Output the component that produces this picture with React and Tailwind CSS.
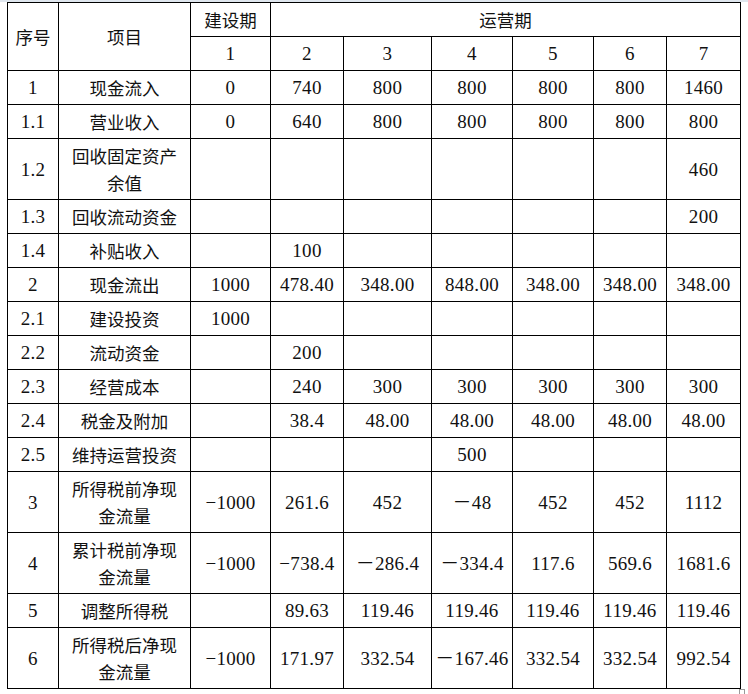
const cn = "font-['Noto_Sans_CJK_SC',sans-serif] text-[17.5px] leading-[27px]";
const num = "font-['Liberation_Serif','Noto_Sans_CJK_SC',serif] text-[19px] leading-[27px] tracking-[0.3px]";
const cell = "border border-black text-center align-middle p-0 text-[#111]";

const colWidths = ["w-[51px]", "w-[132px]", "w-[80px]", "w-[73px]", "w-[88px]", "w-[81px]", "w-[81px]", "w-[73px]", "w-[74px]"];

const rows = [
  { no: "1", name: "现金流入", v: ["0", "740", "800", "800", "800", "800", "1460"] },
  { no: "1.1", name: "营业收入", v: ["0", "640", "800", "800", "800", "800", "800"] },
  { no: "1.2", name: ["回收固定资产", "余值"], v: ["", "", "", "", "", "", "460"] },
  { no: "1.3", name: "回收流动资金", v: ["", "", "", "", "", "", "200"] },
  { no: "1.4", name: "补贴收入", v: ["", "100", "", "", "", "", ""] },
  { no: "2", name: "现金流出", v: ["1000", "478.40", "348.00", "848.00", "348.00", "348.00", "348.00"] },
  { no: "2.1", name: "建设投资", v: ["1000", "", "", "", "", "", ""] },
  { no: "2.2", name: "流动资金", v: ["", "200", "", "", "", "", ""] },
  { no: "2.3", name: "经营成本", v: ["", "240", "300", "300", "300", "300", "300"] },
  { no: "2.4", name: "税金及附加", v: ["", "38.4", "48.00", "48.00", "48.00", "48.00", "48.00"] },
  { no: "2.5", name: "维持运营投资", v: ["", "", "", "500", "", "", ""] },
  { no: "3", name: ["所得税前净现", "金流量"], v: ["−1000", "261.6", "452", "－48", "452", "452", "1112"] },
  { no: "4", name: ["累计税前净现", "金流量"], v: ["−1000", "−738.4", "－286.4", "－334.4", "117.6", "569.6", "1681.6"] },
  { no: "5", name: "调整所得税", v: ["", "89.63", "119.46", "119.46", "119.46", "119.46", "119.46"] },
  { no: "6", name: ["所得税后净现", "金流量"], v: ["−1000", "171.97", "332.54", "－167.46", "332.54", "332.54", "992.54"] },
];

export default function App() {
  return (
    <div className="relative w-[748px] h-[694px] bg-white">
      <div className="h-[2px] bg-[#dfe6ee]" />
      <table className="ml-[7px] border-collapse table-fixed w-[734px]">
        <colgroup>
          {colWidths.map((w, i) => (
            <col key={i} className={w} />
          ))}
        </colgroup>
        <thead>
          <tr className="h-[34px]">
            <th rowSpan={2} className={`${cell} ${cn} font-normal`}>序号</th>
            <th rowSpan={2} className={`${cell} ${cn} font-normal`}>项目</th>
            <th className={`${cell} ${cn} font-normal`}>建设期</th>
            <th colSpan={6} className={`${cell} ${cn} font-normal`}>运营期</th>
          </tr>
          <tr className="h-[34px]">
            {["1", "2", "3", "4", "5", "6", "7"].map((n) => (
              <th key={n} className={`${cell} ${num} font-normal`}>{n}</th>
            ))}
          </tr>
        </thead>
        <tbody>
          {rows.map((r) => {
            const tall = Array.isArray(r.name);
            return (
              <tr key={r.no} className={tall ? "h-[61px]" : "h-[34px]"}>
                <td className={`${cell} ${num}`}>{r.no}</td>
                <td className={`${cell} ${cn}`}>
                  {tall ? (
                    <>
                      {r.name[0]}
                      <br />
                      {r.name[1]}
                    </>
                  ) : (
                    r.name
                  )}
                </td>
                {r.v.map((x, i) => (
                  <td key={i} className={`${cell} ${num}`}>{x}</td>
                ))}
              </tr>
            );
          })}
        </tbody>
      </table>
      {/* table resize handle */}
      <div className="absolute left-[739px] top-[689px] w-[6px] h-[6px] border border-[#9a9a9a] bg-white" />
    </div>
  );
}
